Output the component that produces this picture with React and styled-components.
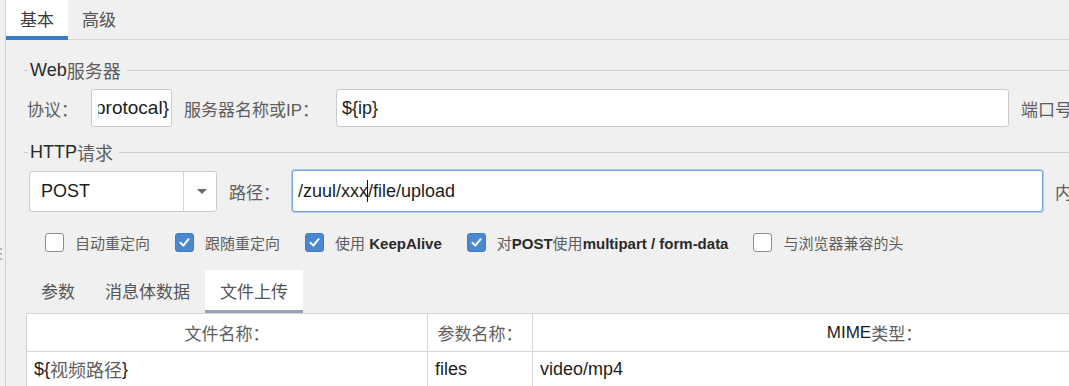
import React from 'react'
import styled, { createGlobalStyle } from 'styled-components'

const GlobalStyle = createGlobalStyle`
  html, body { margin: 0; padding: 0; }
  body {
    background: #f0f0f0;
    font-family: "Liberation Sans", "Noto Sans CJK SC", sans-serif;
    color: #222;
    overflow: hidden;
  }
`

const Page = styled.div`
  display: flex;
  width: 1069px;
  height: 386px;
  overflow: hidden;
  background: #f0f0f0;
`

const Grip = styled.div`
  flex: 0 0 5px;
  display: flex;
  flex-direction: column;
  align-items: flex-start;
  gap: 3px;
  padding-top: 248px;
  box-sizing: border-box;
  span {
    width: 2px;
    height: 2px;
    background: #b8b8b8;
  }
`

const Frame = styled.div`
  flex: 1;
  min-width: 0;
  border-left: 1px solid #d2d2d2;
  display: flex;
  flex-direction: column;
`

const TopTabs = styled.div`
  display: flex;
  height: 39px;
  border-bottom: 1px solid #d6d6d6;
`

const TopTab = styled.div`
  height: 40px;
  box-sizing: border-box;
  margin-bottom: -1px;
  padding: 0 14px;
  display: flex;
  align-items: center;
  font-size: 17px;
  color: ${p => (p.$active ? '#3c3c3c' : '#555')};
  background: ${p => (p.$active ? '#fff' : 'transparent')};
  border-bottom: 4px solid ${p => (p.$active ? '#3a7bc8' : 'transparent')};
`

const Body = styled.div`
  padding-left: 18px;
  display: flex;
  flex-direction: column;
`

const GroupTitle = styled.div`
  display: flex;
  align-items: center;
  height: 22px;
  margin-top: ${p => p.$top}px;
  font-size: 18px;
  color: #2a2a2a;
  &::before {
    content: '';
    width: 4px;
    border-top: 1px solid #cfcfcf;
    margin-right: 2px;
  }
  &::after {
    content: '';
    flex: 1;
    border-top: 1px solid #cfcfcf;
    margin-left: 6px;
  }
`

const Cn = styled.span`
  color: #5e5e5e;
  font-weight: normal;
`

const FieldRow = styled.div`
  display: flex;
  align-items: center;
  gap: 12px;
  margin-top: ${p => p.$top}px;
  padding-left: ${p => p.$indent}px;
  height: ${p => p.$h}px;
  white-space: nowrap;
`

const Label = styled.span`
  font-size: 17px;
  color: #5e5e5e;
  flex: 0 0 auto;
  margin-right: ${p => p.$mr || 0}px;
`

const TextBox = styled.div`
  flex: 0 0 ${p => p.$w}px;
  height: 100%;
  box-sizing: border-box;
  background: #fff;
  border: 1px solid ${p => (p.$focus ? '#76a4dc' : '#cbcbcb')};
  border-radius: 3px;
  box-shadow: ${p => (p.$focus ? '0 0 0 1px #aecbef' : 'none')};
  display: flex;
  align-items: center;
  padding: 0 ${p => (p.$end ? '2px 0 6px' : '5px')};
  overflow: hidden;
  font-size: ${p => p.$size || 18}px;
  color: #1c1c1c;
`

// scrolled text view: keeps the end of a long value visible
const Scrolled = styled.span`
  flex: 1;
  min-width: 0;
  display: flex;
  justify-content: flex-end;
  overflow: hidden;
`

const Caret = styled.span`
  display: inline-block;
  width: 0;
  height: 22px;
  border-left: 1.5px solid #111;
  margin-left: -1px;
  vertical-align: middle;
`

const Select = styled.div`
  flex: 0 0 188px;
  height: 41px;
  box-sizing: border-box;
  display: flex;
  background: #fff;
  border: 1px solid #cbcbcb;
  border-radius: 3px;
  font-size: 18px;
  color: #1c1c1c;
`

const SelectValue = styled.div`
  flex: 1;
  display: flex;
  align-items: center;
  padding-left: 11px;
`

const SelectArrow = styled.div`
  flex: 0 0 32px;
  border-left: 1px solid #d6d6d6;
  display: flex;
  align-items: center;
  justify-content: center;
  &::after {
    content: '';
    border-left: 5px solid transparent;
    border-right: 5px solid transparent;
    border-top: 5px solid #6a6a6a;
    margin-left: 3px;
  }
`

const CheckRow = styled.div`
  display: flex;
  align-items: center;
  gap: 25px;
  margin-top: 20px;
  padding-left: 21px;
  height: 20px;
  white-space: nowrap;
`

const CheckItem = styled.div`
  display: flex;
  align-items: center;
  gap: 11px;
  font-size: 15px;
  color: #5e5e5e;
  b {
    color: #2a2a2a;
  }
`

const Box = styled.div`
  width: 19px;
  height: 19px;
  box-sizing: border-box;
  border-radius: 3px;
  border: 1px solid ${p => (p.$checked ? '#3f7cc4' : '#8e8e8e')};
  background: ${p => (p.$checked ? '#4a89d2' : '#fff')};
  display: flex;
  align-items: center;
  justify-content: center;
`

const InnerTabs = styled.div`
  display: flex;
  height: 43px;
  margin-top: 18px;
  margin-left: 2px;
`

const InnerTab = styled.div`
  padding: 0 15px;
  display: flex;
  align-items: center;
  box-sizing: border-box;
  font-size: 17px;
  color: #555;
  background: ${p => (p.$active ? '#fff' : 'transparent')};
  border-bottom: 3px solid ${p => (p.$active ? '#94a3b6' : 'transparent')};
`

const Table = styled.div`
  display: grid;
  grid-template-columns: 401px 105px 684px;
  width: 1190px;
  margin-left: 2px;
  background: #fff;
  border-top: 1px solid #d4d4d4;
  border-left: 1px solid #d4d4d4;
`

const Cell = styled.div`
  height: ${p => (p.$head ? 37 : 34)}px;
  border-right: 1px solid #d6d6d6;
  border-bottom: 1px solid #d6d6d6;
  display: flex;
  align-items: center;
  justify-content: ${p => (p.$head ? 'center' : 'flex-start')};
  padding-left: ${p => (p.$head ? 0 : 7)}px;
  font-size: ${p => (p.$head ? 17 : 18)}px;
  color: ${p => (p.$head ? '#5e5e5e' : '#1c1c1c')};
  white-space: nowrap;
`

const Dark = styled.span`
  color: #1c1c1c;
`

const Check = () => (
  <svg width="13" height="13" viewBox="0 0 13 13">
    <path d="M2.5 6.8 L5.3 9.6 L10.6 3.2" fill="none" stroke="#fff" strokeWidth="2" strokeLinecap="round" strokeLinejoin="round" />
  </svg>
)

const options = [
  { checked: false, label: <>自动重定向</> },
  { checked: true, label: <>跟随重定向</> },
  { checked: true, label: <>使用 <b>KeepAlive</b></> },
  { checked: true, label: <>对<b>POST</b>使用<b>multipart / form-data</b></> },
  { checked: false, label: <>与浏览器兼容的头</> },
]

export default function App() {
  return (
    <>
      <GlobalStyle />
      <Page>
        <Grip>
          <span />
          <span />
          <span />
        </Grip>
        <Frame>
          <TopTabs>
            <TopTab $active>基本</TopTab>
            <TopTab>高级</TopTab>
          </TopTabs>
          <Body>
            <GroupTitle $top={19}>Web<Cn>服务器</Cn></GroupTitle>
            <FieldRow $top={8} $indent={3} $h={38}>
              <Label $mr={1}>协议：</Label>
              <TextBox $w={81} $end $size={19}>
                <Scrolled>{'${protocal}'}</Scrolled>
              </TextBox>
              <Label $mr={5}>服务器名称或IP：</Label>
              <TextBox $w={673}>{'${ip}'}</TextBox>
              <Label>端口号：</Label>
            </FieldRow>

            <GroupTitle $top={14}>HTTP<Cn>请求</Cn></GroupTitle>
            <FieldRow $top={7} $indent={5} $h={42}>
              <Select>
                <SelectValue>POST</SelectValue>
                <SelectArrow />
              </Select>
              <Label>路径：</Label>
              <TextBox $w={751} $focus>
                /zuul/xxx<Caret />/file/upload
              </TextBox>
              <Label>内容编码：</Label>
            </FieldRow>

            <CheckRow>
              {options.map((o, i) => (
                <CheckItem key={i}>
                  <Box $checked={o.checked}>{o.checked && <Check />}</Box>
                  <span>{o.label}</span>
                </CheckItem>
              ))}
            </CheckRow>

            <InnerTabs>
              <InnerTab>参数</InnerTab>
              <InnerTab>消息体数据</InnerTab>
              <InnerTab $active>文件上传</InnerTab>
            </InnerTabs>

            <Table>
              <Cell $head>文件名称：</Cell>
              <Cell $head>参数名称：</Cell>
              <Cell $head><Dark>MIME</Dark>类型：</Cell>
              <Cell>${'{'}<Cn>视频路径</Cn>{'}'}</Cell>
              <Cell>files</Cell>
              <Cell>video/mp4</Cell>
            </Table>
          </Body>
        </Frame>
      </Page>
    </>
  )
}
